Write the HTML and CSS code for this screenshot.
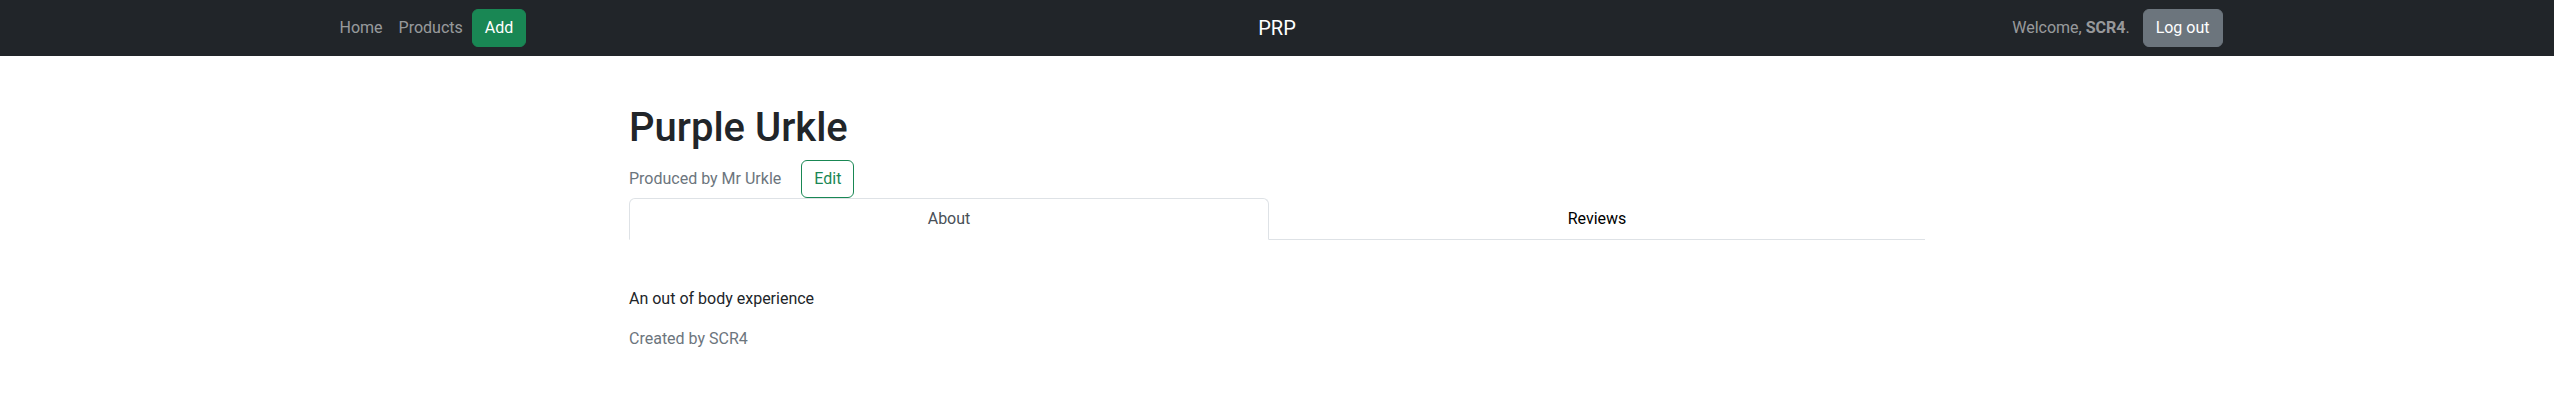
FILE: index.html
```html
<!DOCTYPE html>
<html lang="en">
<head>
<meta charset="utf-8">
<title>PRP</title>
<link rel="stylesheet" href="styles.css">
</head>
<body>
<nav class="navbar">
  <div class="navbar-inner">
    <div class="nav-left">
      <a class="nav-link" href="#">Home</a>
      <a class="nav-link" href="#">Products</a>
      <a class="btn btn-success" href="#">Add</a>
    </div>
    <a class="brand" href="#">PRP</a>
    <div class="nav-right">
      <span class="welcome">Welcome, <strong>SCR4</strong>.</span>
      <a class="btn btn-secondary" href="#">Log out</a>
    </div>
  </div>
</nav>
<main class="container">
  <h1 class="title">Purple Urkle</h1>
  <div class="producer-row">
    <span class="muted">Produced by Mr Urkle</span>
    <a class="btn btn-outline-success" href="#">Edit</a>
  </div>
  <div class="tabs">
    <a class="tab active" href="#">About</a>
    <a class="tab" href="#">Reviews</a>
  </div>
  <div class="tab-pane">
    <p class="desc">An out of body experience</p>
    <p class="muted created">Created by SCR4</p>
  </div>
</main>
</body>
</html>
```
FILE: styles.css
```css
* { box-sizing: border-box; }
html, body {
  margin: 0;
  padding: 0;
  background: #fff;
  font-family: Roboto, "Liberation Sans", sans-serif;
  font-size: 16px;
  line-height: 1.5;
  color: #212529;
}
a { text-decoration: none; }

.navbar {
  background: #212529;
  padding: 8px 0;
}
.navbar-inner {
  width: 1891px;
  margin: 0 auto;
  display: flex;
  align-items: center;
  justify-content: space-between;
  position: relative;
  height: 40px;
}
.nav-left, .nav-right {
  display: flex;
  align-items: center;
}
.nav-link {
  color: rgba(255, 255, 255, 0.55);
  padding: 8px 8px;
}
.nav-left .btn { margin-left: 1px; }
.brand {
  position: absolute;
  left: 50%;
  transform: translateX(-50%);
  color: #fff;
  font-size: 20px;
  line-height: 30px;
  padding: 5px 0;
}
.welcome {
  color: rgba(255, 255, 255, 0.55);
  margin-right: 13px;
}
.welcome strong { font-weight: 700; }

.btn {
  display: inline-block;
  padding: 6px 12px;
  font-size: 16px;
  line-height: 24px;
  border: 1px solid transparent;
  border-radius: 6px;
}
.btn-success { background: #198754; border-color: #198754; color: #fff; }
.btn-secondary { background: #6c757d; border-color: #6c757d; color: #fff; }
.btn-outline-success { color: #198754; border-color: #198754; background: transparent; }

.container {
  width: 1296px;
  margin: 0 auto;
  padding-top: 48px;
}
.title {
  margin: 0 0 8px;
  font-size: 40px;
  font-weight: 500;
  line-height: 1.2;
}
.producer-row {
  display: flex;
  align-items: center;
}
.muted { color: #6c757d; }
.producer-row .btn { margin-left: 20px; }

.tabs {
  display: flex;
  border-bottom: 1px solid #dee2e6;
  margin-top: 0;
}
.tab {
  flex: 1 1 auto;
  text-align: center;
  padding: 8px 16px;
  color: #000;
  border: 1px solid transparent;
  border-top-left-radius: 6px;
  border-top-right-radius: 6px;
  margin-bottom: -1px;
}
.tab.active {
  color: #495057;
  border-color: #dee2e6 #dee2e6 #fff;
  background: #fff;
}
.tab-pane {
  padding-top: 47px;
}
.desc { margin: 0 0 16px; }
.created { margin: 0 0 16px; }
```
